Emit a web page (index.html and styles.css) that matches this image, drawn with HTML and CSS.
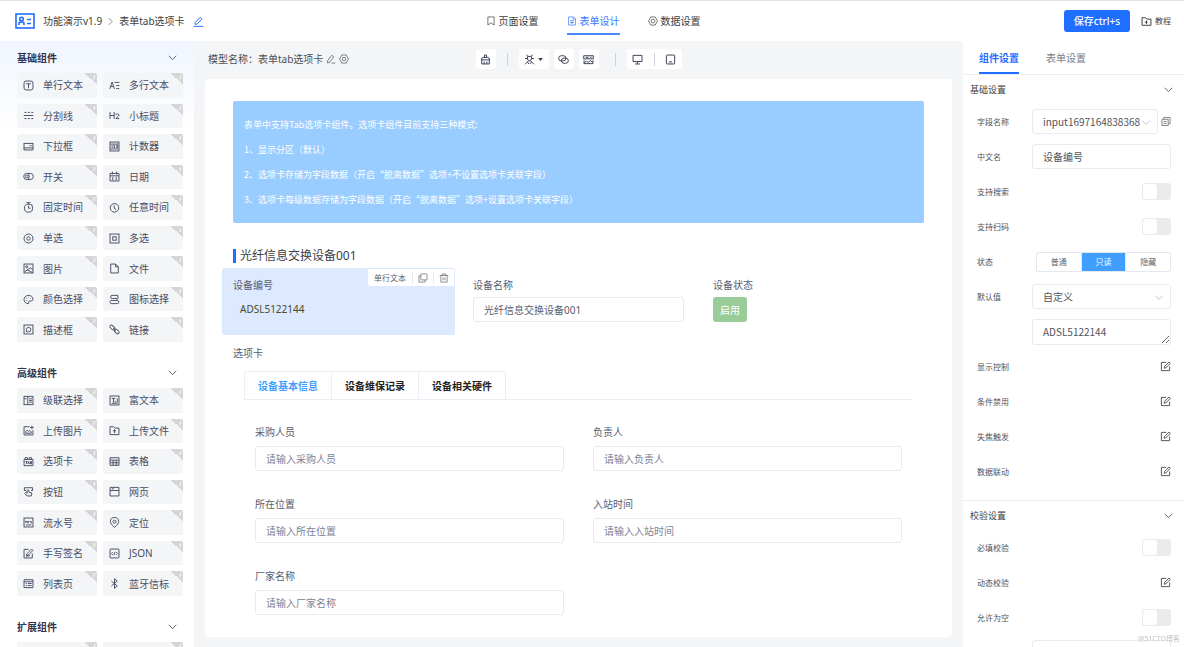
FILE: index.html
```
<!DOCTYPE html>
<html lang="zh-CN">
<head>
<meta charset="utf-8">
<title>表单设计</title>
<link rel="stylesheet" href="styles.css">
</head>
<body>
<header class="topbar">
  <div class="crumbs">
    <svg class="logo" viewBox="0 0 20 16"><rect x="1" y="1" width="18" height="14"/><path d="M4 12V10.500Q4 9 6.500 9T9 10.500V12M12 6.500h4M12 10.500h4"/><circle cx="6.500" cy="6" r="1.800"/></svg>
    <a href="#">功能演示v1.9</a>
    <svg class="icon thin" viewBox="0 0 16 16"><path d="M5 2l6 6-6 6"/></svg>
    <span>表单tab选项卡</span>
    <button class="bare blue" aria-label="编辑名称"><svg class="icon" viewBox="0 0 16 16"><path d="M3 9.500L10.500 2 13 4.500 5.500 12H3zM1 15h14"/></svg></button>
  </div>
  <nav class="topnav">
    <a href="#"><svg class="icon thin" viewBox="0 0 16 16"><path d="M3 1.500h10v13L8 11l-5 3.500z"/></svg>页面设置</a>
    <a href="#" class="on"><svg class="icon thin" viewBox="0 0 16 16"><path d="M2.500 1.500h8l3 3v10h-11zM10 1.500V5h3.500M5 7.500h6M5 10.500h6M8 8v5"/></svg>表单设计</a>
    <a href="#"><svg class="icon thin" viewBox="0 0 16 16"><path d="M4.500 1.500h7L15.200 8l-3.700 6.500h-7L.8 8z"/><circle cx="8" cy="8" r="3"/></svg>数据设置</a>
  </nav>
  <div class="actions">
    <button class="save">保存ctrl+s</button>
    <a href="#"><svg class="icon" viewBox="0 0 16 16"><path d="M1.500 2.500h5l2 2h6v9h-13zM5.500 9h4M8 6.500v5"/></svg>教程</a>
  </div>
</header>

<div class="body">
<aside class="palette">
  <section>
    <h2>基础组件<svg class="icon thin" viewBox="0 0 16 16"><path d="M2.500 5.500L8 11l5.500-5.500"/></svg></h2>
    <div class="items nine">
      <button><svg class="icon" viewBox="0 0 16 16"><rect x="1.500" y="1.500" width="13" height="13" rx="3"/><path d="M4.500 5.500h7M8 5.500V12"/></svg>单行文本</button>
      <button><svg class="icon" viewBox="0 0 16 16"><path d="M1 13L4.500 3 8 13M2.500 9.500h4M8 3.500h7M10.500 8H15M10.500 12.500H15"/></svg>多行文本</button>
      <button><svg class="icon" viewBox="0 0 16 16"><path d="M1 8h14M2 3.500h3M7 3.500h3M12 3.500h3M2 12.500h3M7 12.500h3M12 12.500h3"/></svg>分割线</button>
      <button><svg class="icon" viewBox="0 0 16 16"><path d="M1.500 3v10M7.500 3v10M1.500 8h6M10 7.500q0-2 2.200-2T14.500 7.500q0 1.500-4.500 5h5"/></svg>小标题</button>
      <button><svg class="icon" viewBox="0 0 16 16"><rect x="1.500" y="3.500" width="13" height="6.500"/><path d="M1.500 10v3h13v-3M9.500 6l1.500 1.500L12.500 6"/></svg>下拉框</button>
      <button><svg class="icon" viewBox="0 0 16 16"><rect x="1.500" y="1.500" width="13" height="13"/><path d="M2 4.500h12M2 11.500h12M4.500 6v4M6.500 6.500h2L7 9.500h2M10.500 6.500h2v3h-2M11 8h1"/></svg>计数器</button>
      <button><svg class="icon" viewBox="0 0 16 16"><rect x="1" y="3.500" width="14" height="9" rx="4.500"/><circle cx="5.500" cy="8" r="2"/><path d="M8 4q2 4 0 8"/></svg>开关</button>
      <button><svg class="icon" viewBox="0 0 16 16"><path d="M1.500 3.500h13v11h-13zM1.500 7h13M5 1v4M11 1v4M5.500 8.500v5M10.500 8.500v5"/></svg>日期</button>
      <button><svg class="icon" viewBox="0 0 16 16"><circle cx="8" cy="9" r="5.900"/><path d="M5 1h6M8 1v2.500M8 5.500V9h3M12.500 3.500L14 5"/></svg>固定时间</button>
      <button><svg class="icon" viewBox="0 0 16 16"><circle cx="8" cy="8.500" r="6.200"/><path d="M7.500 5v4l3 2"/></svg>任意时间</button>
      <button><svg class="icon" viewBox="0 0 16 16"><circle cx="8" cy="8" r="6.500"/><circle cx="8" cy="8" r="2.500"/></svg>单选</button>
      <button><svg class="icon" viewBox="0 0 16 16"><rect x="1.500" y="1.500" width="13" height="13"/><rect x="5.500" y="5.500" width="5" height="5"/></svg>多选</button>
      <button><svg class="icon" viewBox="0 0 16 16"><rect x="1.500" y="1.500" width="13" height="13"/><circle cx="5.500" cy="5.500" r="1.500"/><path d="M2 13l9-6 3 3M6 10l8 4"/></svg>图片</button>
      <button><svg class="icon" viewBox="0 0 16 16"><path d="M2.500 1.500h7l4 4v9h-11zM9.500 1.500v4h4"/></svg>文件</button>
      <button><svg class="icon" viewBox="0 0 16 16"><path d="M8 14C4 14.500 1.500 11 1.500 8S4 2 8 2s6.500 2.500 6.500 5.500c0 3-2.500 3-5 2.500-2 0-1 2-1.500 4z"/><path d="M4.500 9.500h.8M4.700 6.200h.8M8 4.800h.8M11 6.500h.8"/></svg>颜色选择</button>
      <button><svg class="icon" viewBox="0 0 16 16"><path d="M12 6.500H4.500a2.200 2.200 0 0 1 0-4.500H13v4.500L10 9.500M3 9.500h9a2.200 2.200 0 0 1 0 4.500H4.500a2.200 2.200 0 0 1-1.500-4.500z"/></svg>图标选择</button>
      <button><svg class="icon" viewBox="0 0 16 16"><rect x="1.500" y="1.500" width="13" height="13"/><path d="M5 11.500V8a3.200 3.200 0 1 1 3 3.300z"/></svg>描述框</button>
      <button><svg class="icon" viewBox="0 0 16 16"><rect x="1" y="3" width="8" height="4.500" rx="2.200" transform="rotate(45 5 5)"/><rect x="7" y="8.500" width="8" height="4.500" rx="2.200" transform="rotate(45 11 11)"/><path d="M6 6l4 4"/></svg>链接</button>
    </div>
  </section>
  <section>
    <h2>高级组件<svg class="icon thin" viewBox="0 0 16 16"><path d="M2.500 5.500L8 11l5.500-5.500"/></svg></h2>
    <div class="items seven">
      <button><svg class="icon" viewBox="0 0 16 16"><rect x="1.500" y="2" width="13" height="12"/><path d="M7 2v12M9 5.500h4M9 8h4M9 10.500h4M2 5.500h3"/></svg>级联选择</button>
      <button><svg class="icon" viewBox="0 0 16 16"><rect x="1.500" y="1.500" width="13" height="13"/><path d="M4 5h5M6.500 5v6M12 5v6M9 8.500v2.500M4 12h8.500"/></svg>富文本</button>
      <button><svg class="icon" viewBox="0 0 16 16"><path d="M9.500 2.500h-8v12h13v-7M13 1v5M10.500 3.500h5M4 12V9.500l2-2 2 2 2-1.500 2 2v2z"/></svg>上传图片</button>
      <button><svg class="icon" viewBox="0 0 16 16"><path d="M1.500 2.500h5l2 2h6v9.500h-13zM8 12V7M5.800 9L8 7l2.200 2"/></svg>上传文件</button>
      <button><svg class="icon" viewBox="0 0 16 16"><path d="M1.500 5h13v9h-13zM3 5V2.500h3.500V5M9 5V2.500h3.500V5M3.500 8h3M5 8v3.500M7 11.500L8.200 8l1.200 3.500M11 8v3.500h1.500V8z"/></svg>选项卡</button>
      <button><svg class="icon" viewBox="0 0 16 16"><path d="M1.500 2.500h13v11h-13zM1.500 6h13M1.500 9.800h13M6 6v7.500M10.500 6v7.500"/></svg>表格</button>
      <button><svg class="icon" viewBox="0 0 16 16"><path d="M4.500 6.500H2v-4h12v4h-2.500M6 14.500L2.500 11 4 9.500l2 1V6.500q1.200-2 2.500 0V9l4.500 1.200L12 14.500z"/></svg>按钮</button>
      <button><svg class="icon" viewBox="0 0 16 16"><path d="M1.500 2h13v12.500h-13zM1.500 6.500h13M4 4.200h3"/></svg>网页</button>
      <button><svg class="icon" viewBox="0 0 16 16"><rect x="1.500" y="1.500" width="13" height="13"/><path d="M4 5.500v3M4 7h3v2M7.500 5.500v3M9.500 6.500h2.500v3M4 11.500h8"/></svg>流水号</button>
      <button><svg class="icon" viewBox="0 0 16 16"><path d="M8 15.200C4 11.500 2 9 2 6.500a6 5.800 0 0 1 12 0C14 9 12 11.500 8 15.200z"/><circle cx="8" cy="6.800" r="2.200"/></svg>定位</button>
      <button><svg class="icon" viewBox="0 0 16 16"><path d="M8 2H1.500v12.500h12V8M5 11.500l1-3.500 6.500-6.500 2 2L8 10zM5 12l5-1"/></svg>手写签名</button>
      <button><svg class="icon" viewBox="0 0 16 16"><rect x="1.500" y="1.500" width="13" height="13" rx="1"/><path d="M5.500 6l-2 2 2 2M10.500 6l2 2-2 2M9 5.500L7 10.500"/></svg>JSON</button>
      <button><svg class="icon" viewBox="0 0 16 16"><path d="M1.500 2.500h13v11.500h-13zM1.500 5.500h13M4 8h1.500M7 8h5.500M4 11h1.500M7 11h5.500"/></svg>列表页</button>
      <button><svg class="icon" viewBox="0 0 16 16"><path d="M3.500 4.500l8.500 7-4 3.500V1l4 3.500-8.500 7"/></svg>蓝牙信标</button>
    </div>
  </section>
  <section>
    <h2>扩展组件<svg class="icon thin" viewBox="0 0 16 16"><path d="M2.500 5.500L8 11l5.500-5.500"/></svg></h2>
    <div class="items">
      <button aria-label="扩展组件一"></button>
      <button aria-label="扩展组件二"></button>
    </div>
  </section>
</aside>

<main class="stage">
  <div class="toolbar">
    <div class="model">模型名称：表单tab选项卡
      <button class="bare" aria-label="编辑模型"><svg class="icon thin" viewBox="0 0 16 16"><path d="M2.500 11L9 2l3.500 2.500L6 13l-3.500 1.500zM9 14.500h6"/></svg></button>
      <button class="bare" aria-label="模型设置"><svg class="icon thin" viewBox="0 0 16 16"><path d="M4.500 1.500h7L15.200 8l-3.700 6.500h-7L.8 8z"/><circle cx="8" cy="8" r="2.800"/></svg></button>
    </div>
    <div class="tools">
      <button aria-label="清空"><svg class="icon" viewBox="0 0 16 16"><path d="M6.500 5V1.500h3V5M2 8.500Q2 5 5 5h6q3 0 3 3.500zM2.500 8.500v6h11v-6M6 14.500V11M10 14.500V11"/></svg></button>
      <i class="rule"></i>
      <button class="wide" aria-label="调试"><svg class="icon" viewBox="0 0 16 16"><path d="M3.500 1l2 2.500h5l2-2.500M5 3.500V8l3 2 3-2V3.500M1.500 6.500H5M11 6.500h3.500M7 9.500L1.500 15M9 9.500l5.500 5.500M5 11.500l2 3M11 11.500l-2.500 3"/></svg><svg class="caret" viewBox="0 0 8 5"><path d="M0 0h8L4 5z"/></svg></button>
      <button aria-label="关联"><svg class="icon" viewBox="0 0 16 16"><rect x="1" y="2.500" width="10.500" height="7.500" rx="3.700"/><rect x="5" y="6" width="10" height="7.500" rx="3.700"/></svg></button>
      <button aria-label="数据"><svg class="icon" viewBox="0 0 16 16"><path d="M1 7V2.500h14V7zM4 4.800h4M10.500 4.800h2M1.500 13.500L5 10l2.500 2.500 3-3L14 12M1.500 9v5h13V9"/></svg></button>
      <i class="rule apart"></i>
      <div class="devices">
        <button aria-label="桌面预览"><svg class="icon" viewBox="0 0 16 16"><path d="M1.500 2h13v9h-13zM8 11v3M4.500 14.500h7"/></svg></button>
        <i class="rule"></i>
        <button aria-label="平板预览"><svg class="icon" viewBox="0 0 16 16"><rect x="2" y="1.500" width="12" height="13" rx="1"/><path d="M5.500 11.500h5"/></svg></button>
      </div>
    </div>
  </div>

  <div class="card">
    <div class="notice">
      <p>表单中支持Tab选项卡组件。选项卡组件目前支持三种模式:</p>
      <p>1、显示分区（默认）</p>
      <p>2、选项卡存储为字段数据（开启“脱离数据”选项+不设置选项卡关联字段）</p>
      <p>3、选项卡每级数据存储为字段数据（开启“脱离数据”选项+设置选项卡关联字段）</p>
    </div>
    <h1>光纤信息交换设备001</h1>
    <div class="fields">
      <div class="cell selected">
        <span class="label">设备编号</span>
        <output>ADSL5122144</output>
        <div class="chip">
          <span>单行文本</span>
          <button aria-label="复制"><svg class="icon thin" viewBox="0 0 16 16"><rect x="4.500" y="1.500" width="10" height="9.500" rx="1"/><path d="M4.500 4.500h-3v10h10V11"/></svg></button>
          <button aria-label="删除"><svg class="icon thin" viewBox="0 0 16 16"><path d="M1 4h14M5 4V1.500h6V4M3 4v10.500h10V4M6.500 7v4.500M9.500 7v4.500"/></svg></button>
        </div>
      </div>
      <div class="cell">
        <label class="label" for="dev-name">设备名称</label>
        <input class="box" id="dev-name" value="光纤信息交换设备001">
      </div>
      <div class="cell">
        <span class="label">设备状态</span>
        <button class="state">启用</button>
      </div>
    </div>
    <div class="label tabs-label">选项卡</div>
    <div class="tabbox">
      <div class="tabs" role="tablist">
        <button role="tab" aria-selected="true">设备基本信息</button>
        <button role="tab" aria-selected="false">设备维保记录</button>
        <button role="tab" aria-selected="false">设备相关硬件</button>
      </div>
      <div class="pane">
        <div class="field"><label class="label" for="f1">采购人员</label><input class="box" id="f1" placeholder="请输入采购人员"></div>
        <div class="field"><label class="label" for="f2">负责人</label><input class="box" id="f2" placeholder="请输入负责人"></div>
        <div class="field"><label class="label" for="f3">所在位置</label><input class="box" id="f3" placeholder="请输入所在位置"></div>
        <div class="field"><label class="label" for="f4">入站时间</label><input class="box" id="f4" placeholder="请输入入站时间"></div>
        <div class="field"><label class="label" for="f5">厂家名称</label><input class="box" id="f5" placeholder="请输入厂家名称"></div>
      </div>
    </div>
  </div>
</main>

<aside class="props">
  <div class="ptabs">
    <button class="on">组件设置</button>
    <button>表单设置</button>
  </div>
  <section>
    <h3>基础设置<svg class="icon thin" viewBox="0 0 16 16"><path d="M2.500 5.500L8 11l5.500-5.500"/></svg></h3>
    <div class="row"><label for="p1">字段名称</label>
      <div class="ctl">
        <div class="pick"><select class="box" id="p1"><option>input1697164838368</option></select><svg class="icon" viewBox="0 0 16 16"><path d="M2 5l6 6 6-6"/></svg></div>
        <button class="bare copy" aria-label="复制字段"><svg class="icon thin" viewBox="0 0 16 16"><path d="M4.500 4V1.500h10v10H12M1.500 4.500H11.500v10h-10zM4 8h5M4 11h5"/></svg></button>
      </div></div>
    <div class="row"><label for="p2">中文名</label><div class="ctl"><input class="box" id="p2" value="设备编号"></div></div>
    <div class="row"><label for="p3">支持搜索</label><input type="checkbox" class="switch" id="p3"></div>
    <div class="row"><label for="p4">支持扫码</label><input type="checkbox" class="switch" id="p4"></div>
    <div class="row"><span>状态</span>
      <div class="seg">
        <label><input type="radio" name="st">普通</label>
        <label><input type="radio" name="st" checked>只读</label>
        <label><input type="radio" name="st">隐藏</label>
      </div></div>
    <div class="row"><label for="p5">默认值</label>
      <div class="ctl"><div class="pick"><select class="box" id="p5"><option>自定义</option></select><svg class="icon" viewBox="0 0 16 16"><path d="M2 5l6 6 6-6"/></svg></div></div></div>
    <div class="row"><span></span><div class="ctl"><textarea class="box" aria-label="默认值内容" rows="1">ADSL5122144</textarea></div></div>
    <div class="row"><span>显示控制</span><button class="bare edit" aria-label="编辑显示控制"><svg class="icon" viewBox="0 0 16 16"><path d="M9 2H2v12h12V8M6 10.500l.7-2.800L13 1.500l2 2L8.700 9.800z"/></svg></button></div>
    <div class="row"><span>条件禁用</span><button class="bare edit" aria-label="编辑条件禁用"><svg class="icon" viewBox="0 0 16 16"><path d="M9 2H2v12h12V8M6 10.500l.7-2.800L13 1.500l2 2L8.700 9.800z"/></svg></button></div>
    <div class="row"><span>失焦触发</span><button class="bare edit" aria-label="编辑失焦触发"><svg class="icon" viewBox="0 0 16 16"><path d="M9 2H2v12h12V8M6 10.500l.7-2.800L13 1.500l2 2L8.700 9.800z"/></svg></button></div>
    <div class="row"><span>数据联动</span><button class="bare edit" aria-label="编辑数据联动"><svg class="icon" viewBox="0 0 16 16"><path d="M9 2H2v12h12V8M6 10.500l.7-2.800L13 1.500l2 2L8.700 9.800z"/></svg></button></div>
  </section>
  <section>
    <h3>校验设置<svg class="icon thin" viewBox="0 0 16 16"><path d="M2.500 5.500L8 11l5.500-5.500"/></svg></h3>
    <div class="row"><label for="p6">必填校验</label><input type="checkbox" class="switch" id="p6"></div>
    <div class="row"><span>动态校验</span><button class="bare edit" aria-label="编辑动态校验"><svg class="icon" viewBox="0 0 16 16"><path d="M9 2H2v12h12V8M6 10.500l.7-2.800L13 1.500l2 2L8.700 9.800z"/></svg></button></div>
    <div class="row"><label for="p7">允许为空</label><input type="checkbox" class="switch" id="p7"></div>
    <div class="row"><span></span><div class="ctl"><input class="box" aria-label="校验提示"></div></div>
  </section>
</aside>
</div>
<div class="watermark">@51CTO博客</div>
</body>
</html>
```

FILE: styles.css
```
* { box-sizing: border-box; margin: 0; }

body {
  height: 100vh;
  display: flex;
  flex-direction: column;
  overflow: hidden;
  background: #f4f5f7;
  color: #3c3e42;
  font: 10px/14px "Noto Sans", "Noto Sans CJK SC", sans-serif;
}
button, input, select, textarea { font: inherit; color: inherit; }
button { border: 0; padding: 0; background: none; }
a { color: inherit; text-decoration: none; }

.icon {
  width: 11px;
  height: 11px;
  flex: none;
  display: block;
  fill: none;
  stroke: currentColor;
  stroke-width: 1.4;
}
.icon.thin { stroke-width: 1.1; }
.bare { display: flex; }
.blue { color: #1e6fff; }

/* top bar */
.topbar {
  flex: none;
  height: 41px;
  border-top: 1px solid #e2e3e5;
  padding: 0 13px 0 15px;
  background: #fff;
  display: grid;
  grid-template-columns: 1fr auto 1fr;
  align-items: center;
}
.crumbs { display: flex; align-items: center; gap: 8px; }
.crumbs > .icon { width: 9px; margin: 0 -4px; }
.logo { width: 20px; height: 16px; fill: none; stroke: #1e6fff; stroke-width: 1.6; }
.topnav { display: flex; gap: 28px; height: 100%; }
.topnav a {
  display: flex;
  align-items: center;
  gap: 3px;
  height: 34px;
  padding-top: 8px;
  border-bottom: 2px solid transparent;
}
.topnav .icon { width: 10px; height: 10px; }
.topnav .on { color: #3478ff; border-color: #4a88ff; }
.actions { display: flex; justify-content: flex-end; align-items: center; gap: 11px; font-size: 8px; }
.actions a { display: flex; align-items: center; gap: 3px; }
.save {
  height: 22px;
  padding: 0 10px;
  border-radius: 3px;
  background: #1e6fff;
  color: #fff;
  font-size: 10px;
  font-weight: 500;
}

.body { flex: 1; min-height: 0; display: flex; }

/* component palette */
.palette {
  width: 194px;
  flex: none;
  overflow: hidden;
  padding: 0 11px 0 17px;
  background: linear-gradient(#f0f5ff, #fff 90px) #fff;
  color: #4a4e64;
}
.palette section { margin-bottom: 14px; }
.palette h2 {
  display: flex;
  align-items: center;
  justify-content: space-between;
  height: 32px;
  padding: 1px 5px 0 0;
  font-size: 10px;
  font-weight: 700;
  color: #30344c;
}
.items { display: grid; grid-template-columns: 1fr 1fr; grid-auto-rows: minmax(24px, 1fr); gap: 6px; }
.nine { min-height: 269px; }
.seven { min-height: 208px; }
.items button {
  position: relative;
  display: flex;
  align-items: center;
  gap: 9px;
  padding-left: 6px;
  border-radius: 2px;
  background: #f4f5f7;
  overflow: hidden;
}
.items button::after {
  content: "i";
  position: absolute;
  top: 0;
  right: 0;
  width: 11px;
  height: 11px;
  padding-right: 2px;
  background: linear-gradient(to top right, transparent 50%, #d3d5d9 50%);
  color: #fff;
  font: italic 700 6px/8px "Noto Sans", sans-serif;
  text-align: right;
}

/* canvas */
.stage { flex: 1; min-width: 0; padding: 0 11px; }
.toolbar {
  display: grid;
  grid-template-columns: 1fr auto 1fr;
  align-items: center;
  height: 38px;
  padding-bottom: 2px;
}
.model { display: flex; align-items: center; gap: 3px; padding-left: 3px; color: #4c4e54; }
.model .icon { width: 10px; height: 10px; }
.tools { display: flex; align-items: center; gap: 5px; color: #3a3e56; }
.tools button { width: 20px; height: 20px; display: flex; align-items: center; justify-content: center; gap: 3px; border-radius: 3px; background: #fff; }
.tools .wide { width: 30px; }
.caret { width: 5px; height: 3px; fill: currentColor; }
.rule { width: 1px; height: 13px; background: #cfd2da; }
.tools > .rule { margin: 0 6px; }
.tools > .apart { margin-left: 11px; }
.devices { display: flex; align-items: center; gap: 6px; padding: 0 1px; border-radius: 3px; background: #fff; }

.card { padding: 22px 28px; border-radius: 4px; background: #fff; }
.notice {
  padding: 11px;
  border-radius: 2px;
  background: #99ccff;
  color: #fff;
  font: 9px/25px "Noto Sans CJK SC", sans-serif;
}
.card h1 {
  display: flex;
  align-items: center;
  gap: 4px;
  height: 18px;
  margin: 24px 0 3px;
  font-size: 12px;
  font-weight: 400;
}
.card h1::before { content: ""; width: 3px; height: 14px; background: #1e6fff; }
.label { display: block; height: 14px; color: #585c70; }
.box {
  display: block;
  width: 100%;
  height: 25px;
  padding: 0 10px;
  border: 1px solid #e8eaf0;
  border-radius: 3px;
  background: #fff;
  color: #585c70;
  outline: 0;
}
.box::placeholder { color: #7d8296; opacity: 1; }
.fields { display: grid; grid-template-columns: repeat(3, 1fr); gap: 29px; }
.cell { position: relative; display: flex; flex-direction: column; align-items: flex-start; gap: 5px; padding: 10px 0 13px; }
.selected { margin: 0 -11px; padding-left: 11px; border-radius: 3px; background: #dce9ff; }
.selected output { padding-left: 7px; line-height: 25px; color: #4b4b2a; }
.chip {
  position: absolute;
  top: 1px;
  right: 1px;
  height: 17px;
  display: flex;
  align-items: center;
  border-radius: 0 2px 0 2px;
  background: #fff;
  color: #606266;
  font-size: 8px;
}
.chip span { padding: 0 6px; }
.chip button { padding: 1px 5px; border-left: 1px solid #e4e7ef; }
.chip .icon { width: 10px; height: 10px; }
.state { height: 25px; padding: 0 7px; border-radius: 3px; background: #99cc99; color: #fff; }
.tabs-label { margin: 11px 0; }
.tabbox { padding: 0 11px; }
.tabs { display: flex; border-bottom: 1px solid #ebeef5; height: 29px; }
.tabs button {
  padding: 0 13px;
  border: solid #ebeef5;
  border-width: 1px 1px 0 0;
  font-weight: 700;
  color: #222;
}
.tabs button:first-child { border-left-width: 1px; border-radius: 2px 0 0 0; }
.tabs button:last-child { border-radius: 0 2px 0 0; }
.tabs [aria-selected="true"] { color: #409eff; }
.pane { display: grid; grid-template-columns: 1fr 1fr; gap: 26px 29px; padding: 25px 11px 0; }
.field { display: grid; gap: 7px; }

/* properties */
.props { width: 221px; flex: none; overflow: hidden; background: #fff; color: #505359; font-size: 8px; }
.ptabs { display: flex; gap: 27px; height: 34px; padding: 0 16px; border-bottom: 1px solid #ebeef5; font-size: 10px; color: #7a7d85; }
.ptabs button { padding-top: 2px; border-bottom: 2px solid transparent; }
.ptabs .on { font-weight: 700; color: #1e6fff; border-color: #1e6fff; }
.props section { padding: 0 13px 11px 14px; border-bottom: 1px solid #ebeef5; }
.props h3 { display: flex; justify-content: space-between; align-items: center; height: 29px; margin: 0 -3px 0 -7px; font-size: 9px; font-weight: 400; color: #3c3e42; }
.row { display: flex; align-items: center; justify-content: space-between; height: 35px; }
.ctl { width: 139px; display: flex; align-items: center; gap: 3px; font-family: "Noto Sans CJK SC", sans-serif; font-size: 10px; }
.pick { position: relative; flex: 1; color: #b4b8c2; }
.pick select { appearance: none; }
.pick .icon { position: absolute; top: 8px; right: 7px; width: 10px; pointer-events: none; }
.ctl textarea { height: 26px; padding-top: 4px; line-height: 15px; resize: vertical; overflow: hidden; }
.ctl .box { color: #505359; }
.copy .icon { width: 10px; }
.switch {
  appearance: none;
  width: 29px;
  height: 17px;
  padding: 1px;
  border-radius: 3px;
  background: #ebebeb;
}
.switch::before { content: ""; display: block; width: 14px; height: 15px; border-radius: 3px; background: #fff; }
.seg { display: flex; width: 135px; height: 20px; border: 1px solid #e4e7ef; border-radius: 2px; }
.seg label { position: relative; flex: 1; display: flex; align-items: center; justify-content: center; color: #606266; }
.seg label + label { border-left: 1px solid #e4e7ef; }
.seg input { appearance: none; position: absolute; inset: 0; margin: 0; }
.seg label:has(:checked) { background: #409eff; color: #fff; }

.watermark { position: fixed; right: 4px; bottom: 1px; color: #c4c4c8; font-size: 7px; }
```
